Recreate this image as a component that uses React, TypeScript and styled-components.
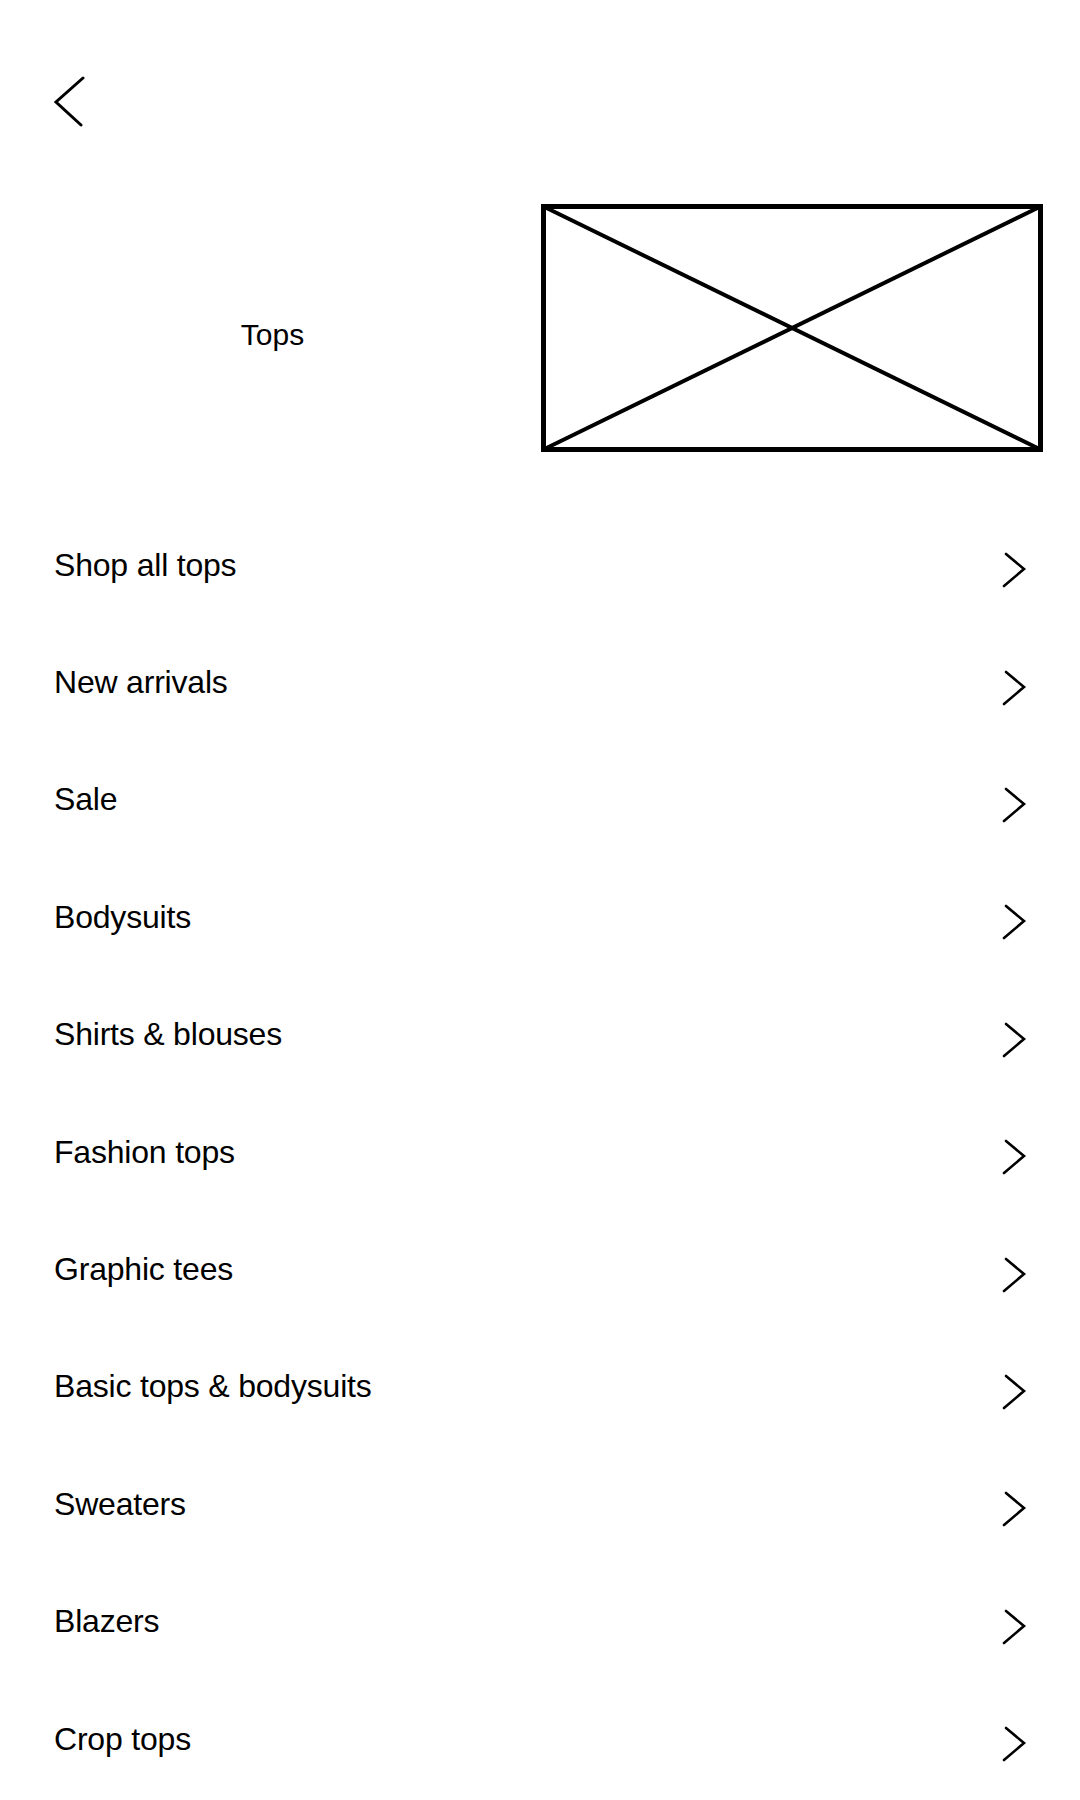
import * as React from 'react'
import styled, { createGlobalStyle } from 'styled-components'

const GlobalStyle = createGlobalStyle`
    html, body {
        margin: 0;
        padding: 0;
        background: #fff;
    }
    body {
        font-family: "Liberation Sans", Arial, sans-serif;
        color: #000;
    }
`

const Page = styled.div`
    width: 1080px;
    min-height: 1800px;
    background: #fff;
`

const Header = styled.div`
    padding: 76px 0 0 53px;
    height: 52px;
`

const BackButton = styled.button`
    border: 0;
    padding: 0;
    background: none;
    display: block;
    width: 32px;
    height: 52px;
    cursor: pointer;
`

const Hero = styled.div`
    margin-top: 76px;
    display: grid;
    grid-template-columns: 541px 502px;
    height: 248px;
`

const HeroTitle = styled.div`
    display: flex;
    align-items: center;
    justify-content: center;
    font-size: 30px;
    line-height: 1;
    padding-top: 13px;
    padding-left: 4px;
`

const Placeholder = styled.svg`
    display: block;
    width: 502px;
    height: 248px;
`

const List = styled.ul`
    list-style: none;
    margin: 54px 0 0;
    padding: 0;
`

const Row = styled.li`
    height: 117.4px;
    display: flex;
    align-items: center;
    justify-content: space-between;
    padding: 0 52px 0 54px;
    cursor: pointer;
`

const Label = styled.span`
    font-size: 32px;
    line-height: 1;
    letter-spacing: -0.2px;
`

const Chevron = styled.svg`
    width: 26px;
    height: 36px;
    margin-top: 11px;
    flex: none;
`

const items = [
    'Shop all tops',
    'New arrivals',
    'Sale',
    'Bodysuits',
    'Shirts & blouses',
    'Fashion tops',
    'Graphic tees',
    'Basic tops & bodysuits',
    'Sweaters',
    'Blazers',
    'Crop tops',
]

const App = () => {
    return (
        <Page>
            <GlobalStyle />
            <Header>
                <BackButton aria-label="Back">
                    <svg width="32" height="52" viewBox="0 0 32 52" fill="none">
                        <polyline points="30,2 3,26 28,49" stroke="#000" strokeWidth="3" strokeLinecap="round" strokeLinejoin="miter" />
                    </svg>
                </BackButton>
            </Header>
            <Hero>
                <HeroTitle>Tops</HeroTitle>
                <Placeholder viewBox="0 0 502 248" fill="none">
                    <rect x="2.5" y="2.5" width="497" height="243" stroke="#000" strokeWidth="5" />
                    <line x1="2.5" y1="2.5" x2="499.5" y2="245.5" stroke="#000" strokeWidth="4" />
                    <line x1="2.5" y1="245.5" x2="499.5" y2="2.5" stroke="#000" strokeWidth="4" />
                </Placeholder>
            </Hero>
            <List>
                {items.map(item => (
                    <Row key={item}>
                        <Label>{item}</Label>
                        <Chevron viewBox="0 0 26 36" fill="none">
                            <polyline points="4,2 22,17 2,34" stroke="#000" strokeWidth="2.6" strokeLinecap="round" />
                        </Chevron>
                    </Row>
                ))}
            </List>
        </Page>
    )
}

export default App
